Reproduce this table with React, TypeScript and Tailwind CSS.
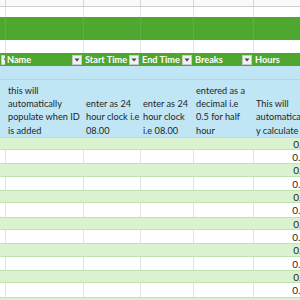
const widths = ["w-[6px]", "w-[78px]", "w-[57px]", "w-[53px]", "w-[60px]", "w-[62px]"];
const letters = ["B", "C", "D", "E", "F", "G"];
const headers = ["", "Name", "Start Time", "End Time", "Breaks", "Hours"];

const notes: string[][] = [
  [],
  ["this will", "automatically", "populate when ID", "is added"],
  ["enter as 24", "hour clock i.e", "08.00"],
  ["enter as 24", "hour clock", "i.e 08.00"],
  ["entered as a", "decimal i.e", "0.5 for half", "hour"],
  ["This will", "automaticall", "y calculate"],
];

const rowHeights = ["h-[13px]", "h-[13px]", "h-[14px]"];

function FilterButton() {
  return (
    <div className="flex h-[10px] w-[10px] shrink-0 items-center justify-center border border-[#c9c9c9] bg-[#f2f2f2]">
      <svg width="6" height="4" viewBox="0 0 6 4">
        <path d="M0.5 0.5 L5.5 0.5 L3 3.5 Z" fill="#444" />
      </svg>
    </div>
  );
}

function GridRow({ height, lines }: { height: string; lines: string }) {
  return (
    <div className={`flex ${height}`}>
      {widths.map((w, i) => (
        <div key={i} className={`${w} shrink-0 border-r ${lines}`} />
      ))}
    </div>
  );
}

export default function App() {
  const dataRows = Array.from({ length: 13 }, (_, i) => i);

  return (
    <div className="h-[300px] w-[300px] overflow-hidden bg-white font-[Lato,'Liberation_Sans',sans-serif] text-[9.2px] text-[#1f1f1f]">
      <div className="w-[340px]">
        {/* column letters, mostly scrolled off */}
        <div className="flex h-[7px] border-b border-[#cfcfcf] bg-[#fafafa]">
          {widths.map((w, i) => (
            <div key={i} className={`${w} shrink-0 overflow-hidden border-r border-[#d6d6d6]`}>
              <div className="-mt-[12px] flex h-[14px] items-center justify-center text-[11px] text-[#6b6b6b]">
                {letters[i]}
              </div>
            </div>
          ))}
        </div>

        <GridRow height="h-[10px]" lines="border-[#e3e3e3]" />
        <div className="flex h-[23px] bg-[#4ea72e]">
          {widths.map((w, i) => (
            <div key={i} className={`${w} shrink-0 border-r border-[#5fb042]`} />
          ))}
        </div>
        <GridRow height="h-[13px]" lines="border-[#e3e3e3]" />

        {/* table header */}
        <div className="flex h-[13px] bg-[#4ea72e] font-bold text-white">
          {headers.map((h, i) => (
            <div
              key={i}
              className={`${widths[i]} flex shrink-0 items-center justify-between overflow-hidden border-r border-[#4ea72e] pl-[1px]`}
            >
              {h && <span className="whitespace-nowrap leading-none">{h}</span>}
              <div className="ml-auto mr-[1px]">
                <FilterButton />
              </div>
            </div>
          ))}
        </div>

        {/* notes rows */}
        <div className="h-[14px] border-b border-[#a9d6ea] bg-[#c0e6f5]" />
        <div className="flex h-[57px] bg-[#c0e6f5]">
          {notes.map((n, i) => (
            <div key={i} className={`${widths[i]} flex shrink-0 flex-col justify-end overflow-hidden border-r border-[#c0e6f5] pl-[2px]`}>
              {n.map((line) => (
                <div key={line} className="whitespace-nowrap leading-[13.33px]">
                  {line}
                </div>
              ))}
            </div>
          ))}
        </div>

        {/* banded rows */}
        {dataRows.map((r) => {
          const green = r % 2 === 0;
          return (
            <div
              key={r}
              className={
                green
                  ? `flex ${rowHeights[r % 3]} border-y border-[#bfe2b1] bg-[#daf2d0]`
                  : `flex ${rowHeights[r % 3]} bg-white`
              }
            >
              {widths.map((w, i) => (
                <div
                  key={i}
                  className={
                    green
                      ? `${w} flex shrink-0 items-center justify-end pr-[3px]`
                      : `${w} flex shrink-0 items-center justify-end border-r border-[#e3e3e3] pr-[3px]`
                  }
                >
                  {i === 5 && <span className="text-[10px] leading-none">0.00</span>}
                </div>
              ))}
            </div>
          );
        })}
      </div>
    </div>
  );
}
